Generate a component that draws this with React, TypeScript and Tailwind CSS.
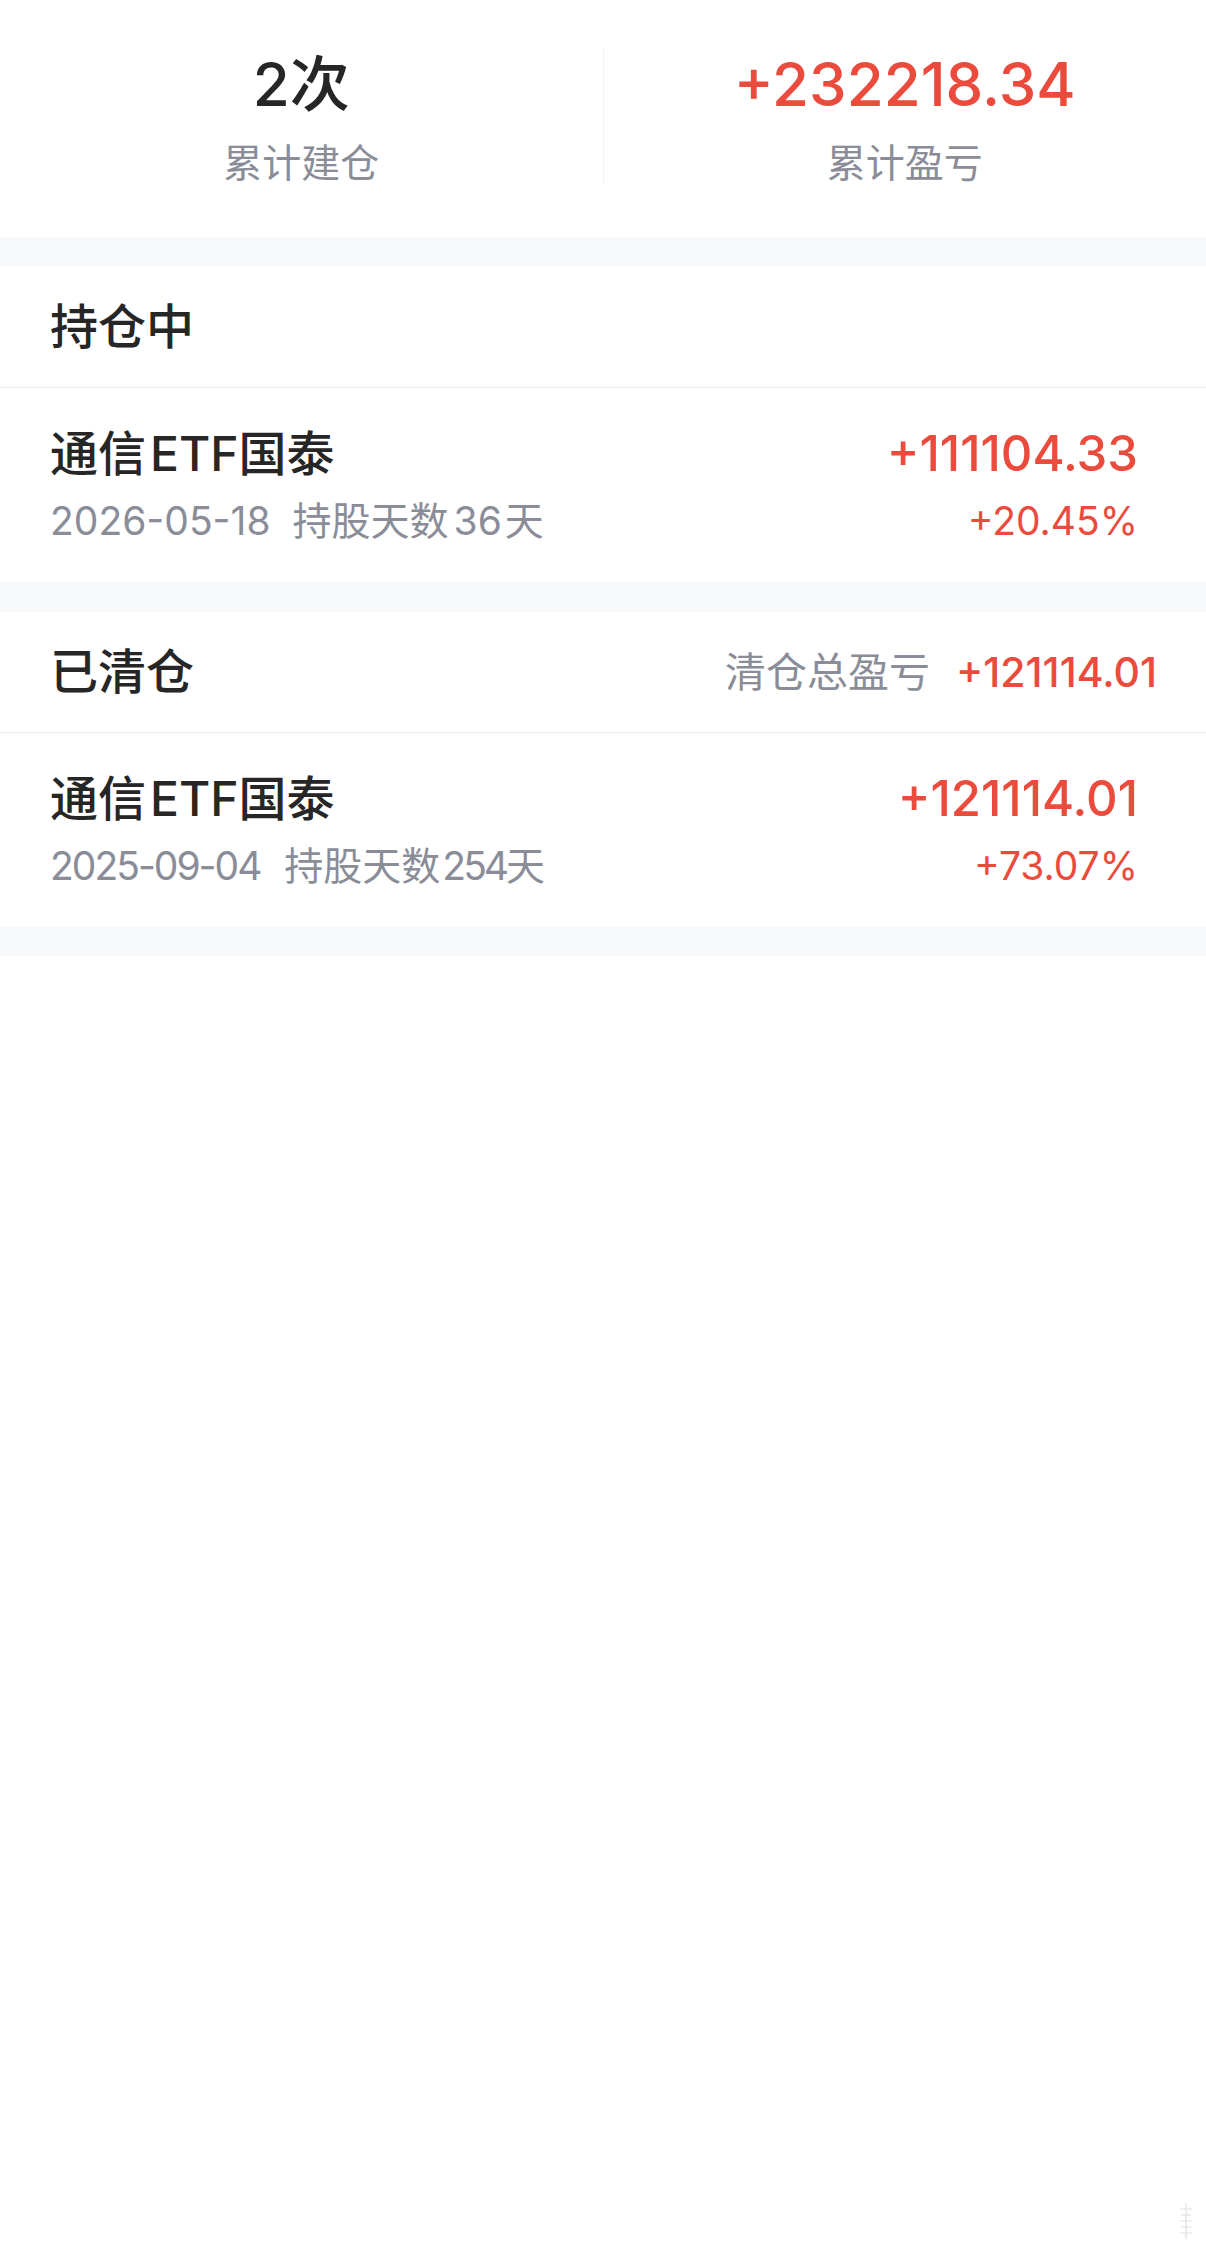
import React from "react";

const font = "font-['Inter','Noto_Sans_CJK_SC',sans-serif]";

type Holding = {
  date: string;
  days: string;
  profit: string;
  rate: string;
  dateClass: string;
  gapClass: string;
  daysClass: string;
};

function HoldingRow({ item }: { item: Holding }) {
  return (
    <div className="h-[194px] flex flex-col pt-[38px] pl-[50px] pr-[68px]">
      <div className="flex items-center justify-between h-[56px]">
        <span className="text-[48px] leading-[56px] text-[#262626] font-medium">
          通信<span className="ml-[4px]">ETF</span>国泰
        </span>
        <span className="text-[49px] leading-[56px] text-[#eb4b3c] font-medium">{item.profit}</span>
      </div>
      <div className="flex items-center justify-between h-[48px] mt-[15px]">
        <div className="flex items-center text-[39px] leading-[48px] text-[#8a8d98]">
          <span className={item.dateClass}>{item.date}</span>
          <span className={item.gapClass}>持股天数</span>
          <span className={item.daysClass}>{item.days}</span>
          <span>天</span>
        </div>
        <span className="text-[39px] leading-[48px] text-[#eb4b3c]">{item.rate}</span>
      </div>
    </div>
  );
}

function Band() {
  return <div className="h-[29px] bg-[#f7f8fa]" />;
}

export default function App() {
  const holding: Holding = {
    date: "2026-05-18",
    days: "36",
    profit: "+111104.33",
    rate: "+20.45%",
    dateClass: "",
    gapClass: "ml-[22px]",
    daysClass: "ml-[5px] mr-[3px]",
  };
  const cleared: Holding = {
    date: "2025-09-04",
    days: "254",
    profit: "+121114.01",
    rate: "+73.07%",
    dateClass: "tracking-[-2px]",
    gapClass: "ml-[24px]",
    daysClass: "ml-[2px] tracking-[-3px]",
  };

  return (
    <div className={`${font} relative min-h-[2253px] bg-white`}>
      {/* summary */}
      <section className="flex h-[237px]">
        <div className="flex-1 flex flex-col items-center pt-[48px]">
          <div className="text-[60px] leading-[72px] font-medium text-[#262626]">2次</div>
          <div className="mt-[19px] text-[39px] leading-[48px] text-[#8a8d98]">累计建仓</div>
        </div>
        <div className="w-px h-[133px] mt-[50px] bg-[#f0f0f0]" />
        <div className="flex-1 flex flex-col items-center pt-[48px]">
          <div className="text-[60px] leading-[72px] font-medium text-[#eb4b3c]">+232218.34</div>
          <div className="mt-[19px] text-[39px] leading-[48px] text-[#8a8d98]">累计盈亏</div>
        </div>
      </section>

      <Band />

      {/* holding */}
      <section>
        <div className="h-[121px] flex items-center px-[50px]">
          <span className="text-[48px] leading-[56px] font-medium text-[#262626]">持仓中</span>
        </div>
        <div className="h-px bg-[#ebebeb]" />
        <HoldingRow item={holding} />
      </section>

      <div className="h-[30px] bg-[#f7f8fa]" />

      {/* cleared */}
      <section>
        <div className="h-[120px] flex items-center justify-between pl-[50px] pr-[49px]">
          <span className="text-[48px] leading-[56px] font-medium text-[#262626]">已清仓</span>
          <div className="flex items-center gap-[26px]">
            <span className="text-[41px] leading-[48px] text-[#8a8d98]">清仓总盈亏</span>
            <span className="text-[41px] leading-[48px] font-medium text-[#eb4b3c]">+121114.01</span>
          </div>
        </div>
        <div className="h-px bg-[#ebebeb]" />
        <HoldingRow item={cleared} />
      </section>

      <Band />

      {/* faint scroll mark */}
      <svg
        className="absolute right-[12px] bottom-[12px]"
        width="16"
        height="40"
        viewBox="0 0 16 40"
        fill="none"
        stroke="#e0e0e0"
        strokeWidth="1.2"
      >
        <path d="M8 2v36" />
        <path d="M2 8h12M3 14h10M2 20h12M3 26h10M2 32h12" />
      </svg>
    </div>
  );
}
